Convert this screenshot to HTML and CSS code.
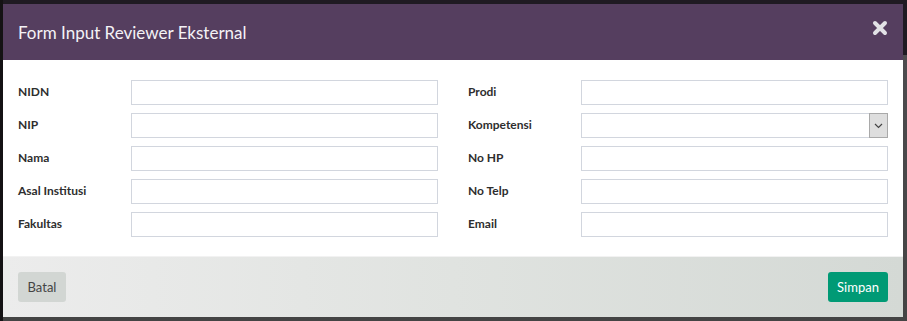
FILE: index.html
```html
<!DOCTYPE html>
<html lang="id">
  <head>
    <meta charset="UTF-8" />
    <meta name="viewport" content="width=device-width, initial-scale=1.0" />
    <title>Form Input Reviewer Eksternal</title>
    <link rel="stylesheet" href="styles.css">
  </head>
  <body>
    <div class="latar">
      <div class="modal">
        <header class="modal-header">
          <h4>Form Input Reviewer Eksternal</h4>
          <button class="tutup" aria-label="Tutup">
            <svg width="16" height="16" viewBox="0 0 16 16">
              <path d="M3 3 L13 13 M13 3 L3 13" stroke="#e2e2e6" stroke-width="4" stroke-linecap="round" />
            </svg>
          </button>
        </header>

        <form class="modal-body">
          <div class="kolom">
            <div class="baris"><label>NIDN</label><input type="text" /></div>
            <div class="baris"><label>NIP</label><input type="text" /></div>
            <div class="baris"><label>Nama</label><input type="text" /></div>
            <div class="baris"><label>Asal Institusi</label><input type="text" /></div>
            <div class="baris"><label>Fakultas</label><input type="text" /></div>
          </div>
          <div class="kolom">
            <div class="baris"><label>Prodi</label><input type="text" /></div>
            <div class="baris">
              <label>Kompetensi</label>
              <div class="pilih">
                <span class="panah">
                  <svg width="9" height="6" viewBox="0 0 9 6">
                    <path d="M1 1 L4.5 4.5 L8 1" fill="none" stroke="#444" stroke-width="1.2" />
                  </svg>
                </span>
              </div>
            </div>
            <div class="baris"><label>No HP</label><input type="text" /></div>
            <div class="baris"><label>No Telp</label><input type="text" /></div>
            <div class="baris"><label>Email</label><input type="text" /></div>
          </div>
        </form>

        <footer class="modal-footer">
          <button class="btn batal">Batal</button>
          <button class="btn simpan">Simpan</button>
        </footer>
      </div>
    </div>
  </body>
</html>
```

FILE: styles.css
```css
body {
  margin: 0;
  background-color: #474747;
  font-family: "Lato", "Noto Sans", sans-serif;
}
.latar {
  height: 321px;
  background: linear-gradient(#1f1a22 0, #1f1a22 55px, #4d4b4e 55px, #444 100%);
  border-left: 3px solid #141214;
  padding-top: 4px;
  box-sizing: border-box;
}
.modal {
  width: 900px;
  background-color: white;
}
.modal-header {
  background-color: #553e5f;
  height: 56px;
  padding: 0 15px;
  display: flex;
  align-items: center;
  justify-content: space-between;
}
.modal-header h4 {
  margin: 0;
  color: #f4f2f6;
  font-size: 17px;
  font-weight: normal;
}
.tutup {
  background: none;
  border: 0;
  padding: 0;
  margin-top: -8px;
  display: flex;
}
.modal-body {
  display: grid;
  grid-template-columns: 1fr 1fr;
  gap: 30px;
  padding: 20px 15px 19px;
}
.kolom {
  display: flex;
  flex-direction: column;
  gap: 8px;
}
.baris {
  display: grid;
  grid-template-columns: 113px 1fr;
  align-items: center;
}
.baris label {
  font-size: 12px;
  font-weight: bold;
  color: #2e2e2e;
  margin-top: -3px;
}
.baris input,
.pilih {
  height: 25px;
  box-sizing: border-box;
  border: 1px solid #d2d6de;
  margin: 0;
  padding: 0 6px;
  font-family: inherit;
}
.pilih {
  display: flex;
  justify-content: flex-end;
  padding: 0;
}
.panah {
  width: 17px;
  background-color: #dedede;
  border: 1px solid #a9a9a9;
  margin: -1px -1px -1px 0;
  display: flex;
  align-items: center;
  justify-content: center;
}
.modal-footer {
  height: 60px;
  border-top: 1px solid #f2f2f2;
  background: linear-gradient(to right, #ececec, #e0e3e0 50%, #d4d9d5);
  padding: 0 15px;
  display: flex;
  align-items: center;
  justify-content: space-between;
}
.btn {
  height: 30px;
  border: 0;
  border-radius: 3px;
  font-family: inherit;
  font-size: 13px;
  padding: 0 12px;
}
.batal {
  width: 48px;
  padding: 0;
  background-color: #d2d6d3;
  color: #444;
}
.simpan {
  width: 60px;
  padding: 0;
  background-color: #009a75;
  color: white;
}
```
